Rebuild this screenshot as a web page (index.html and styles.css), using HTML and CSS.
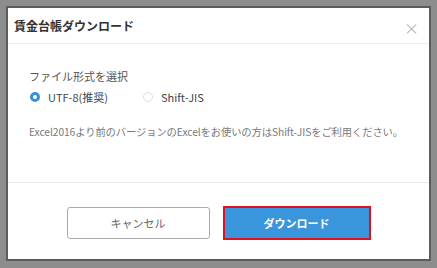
FILE: index.html
```html
<!DOCTYPE html>
<html lang="ja">
<head>
    <meta charset="UTF-8" />
    <title>賃金台帳ダウンロード</title>
    <link rel="stylesheet" href="styles.css">
</head>
<body>
    <div class="dialog">
        <!-- Header -->
        <div class="dialog-header">
            <h2>賃金台帳ダウンロード</h2>
            <span class="close">&times;</span>
        </div>

        <!-- Body -->
        <div class="dialog-body">
            <p class="label">ファイル形式を選択</p>
            <div class="radios">
                <label class="radio"><span class="dot checked"></span>UTF-8(推奨)</label>
                <label class="radio"><span class="dot"></span>Shift-JIS</label>
            </div>
            <p class="note">Excel2016より前のバージョンのExcelをお使いの方はShift-JISをご利用ください。</p>
        </div>

        <!-- Footer -->
        <div class="dialog-footer">
            <button class="btn btn-cancel">キャンセル</button>
            <button class="btn btn-primary">ダウンロード</button>
        </div>
    </div>
</body>
</html>
```

FILE: styles.css
```css
/* Page backdrop */
body {
    margin: 0;
    padding: 6px 6px 5px 6px;
    background: #8d8d8d;
    font-family: "Noto Sans CJK JP", "Noto Sans", sans-serif;
    color: #333;
}

/* Dialog box */
.dialog {
    height: 251px;
    background: #fff;
    border: 2px solid #5c5c5c;
    display: flex;
    flex-direction: column;
}

/* Header */
.dialog-header {
    height: 35px;
    display: flex;
    align-items: center;
    justify-content: space-between;
    padding: 0 10px 0 6px;
    border-bottom: 1px solid #ececec;
}

.dialog-header h2 {
    margin: 0;
    font-size: 12px;
    font-weight: bold;
    color: #333;
}

.close {
    font-size: 15px;
    color: #b8b8b8;
    line-height: 1;
    margin-top: 3px;
}

/* Body */
.dialog-body {
    flex: 1;
    padding: 24px 21px 0 21px;
    border-bottom: 1px solid #ececec;
}

.label {
    margin: 0;
    font-size: 11px;
    color: #555;
}

.radios {
    display: flex;
    gap: 25px;
    margin-top: 5px;
}

.radio {
    display: flex;
    align-items: center;
    gap: 8px;
    font-size: 11px;
    color: #444;
    width: 88px;
}

.dot {
    width: 10px;
    height: 10px;
    border-radius: 50%;
    border: 1px solid #ddd;
    box-sizing: border-box;
    margin-left: 1px;
}

.dot.checked {
    border: 3px solid #3a90d8;
}

.note {
    margin: 19px 0 0 0;
    font-size: 10.3px;
    letter-spacing: -0.1px;
    color: #7a7a7a;
    white-space: nowrap;
}

/* Footer */
.dialog-footer {
    height: 76px;
    display: flex;
    align-items: center;
    justify-content: center;
    gap: 13px;
    padding-top: 4px;
    box-sizing: border-box;
}

.btn {
    font-family: inherit;
    font-size: 11px;
    height: 32px;
    cursor: pointer;
}

.btn-cancel {
    width: 143px;
    background: #fff;
    color: #666;
    border: 1px solid #aaa;
    border-radius: 3px;
}

.btn-primary {
    width: 148px;
    height: 34px;
    background: #3a96dc;
    color: #fff;
    font-weight: bold;
    border: 2px solid #e0101c;
}
```
